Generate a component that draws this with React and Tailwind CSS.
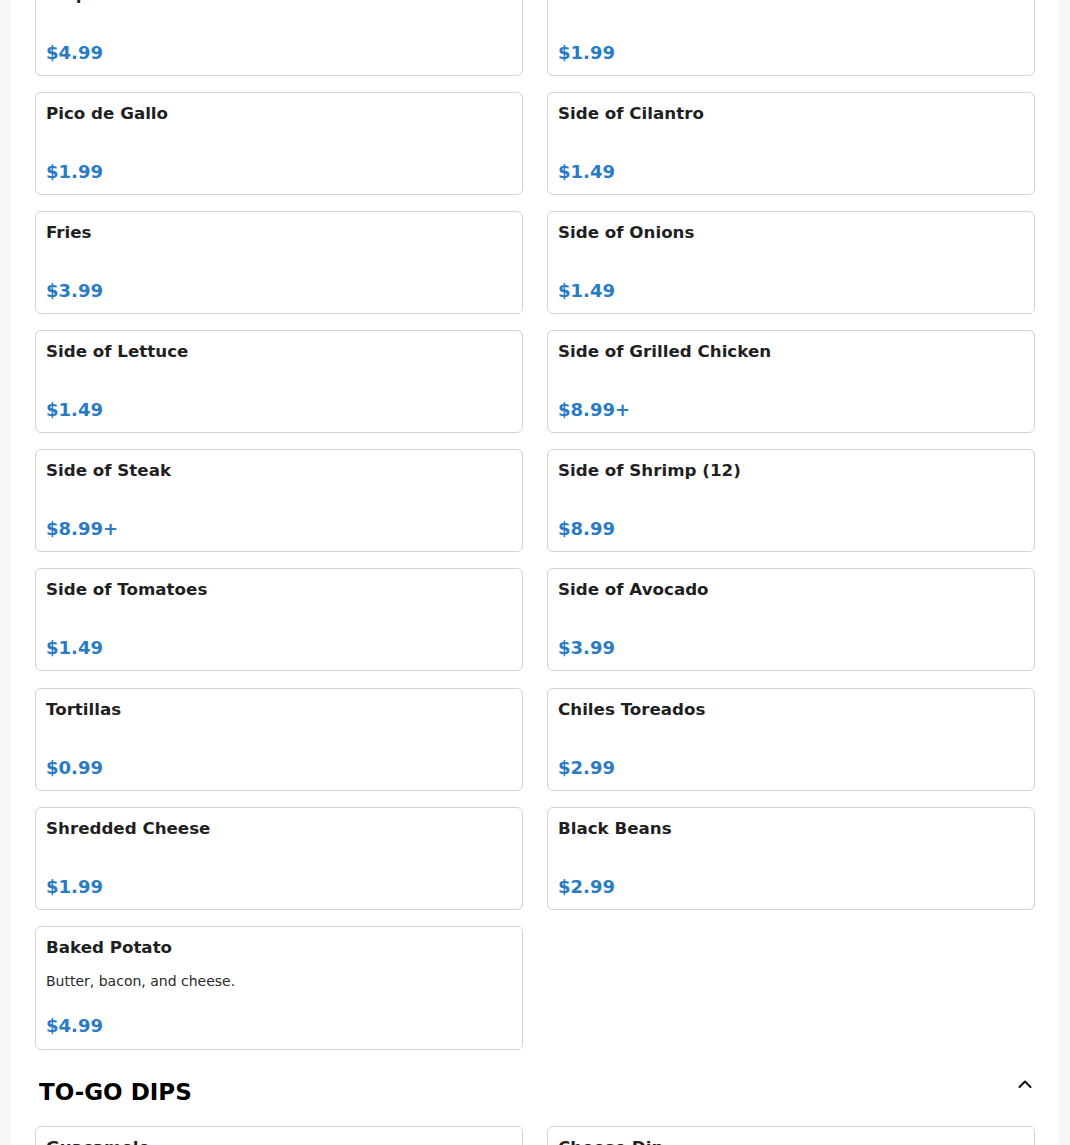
import React from "react";

const rows = [
  [{ t: "Chipotle Enchilada Sauce", p: "$4.99" }, { t: "Sour Cream", p: "$1.99" }],
  [{ t: "Pico de Gallo", p: "$1.99" }, { t: "Side of Cilantro", p: "$1.49" }],
  [{ t: "Fries", p: "$3.99" }, { t: "Side of Onions", p: "$1.49" }],
  [{ t: "Side of Lettuce", p: "$1.49" }, { t: "Side of Grilled Chicken", p: "$8.99+" }],
  [{ t: "Side of Steak", p: "$8.99+" }, { t: "Side of Shrimp (12)", p: "$8.99" }],
  [{ t: "Side of Tomatoes", p: "$1.49" }, { t: "Side of Avocado", p: "$3.99" }],
  [{ t: "Tortillas", p: "$0.99" }, { t: "Chiles Toreados", p: "$2.99" }],
  [{ t: "Shredded Cheese", p: "$1.99" }, { t: "Black Beans", p: "$2.99" }],
  [{ t: "Baked Potato", d: "Butter, bacon, and cheese.", p: "$4.99" }],
];

function Card({ item }) {
  if (item.d) {
    return (
      <div className="rounded-md border border-[#d2d2d2] bg-white px-[10px] pt-[10px] pb-[12px]">
        <div className="text-[16.7px] font-bold leading-[20px] text-[#1f1f1f]">{item.t}</div>
        <div className="mt-[14px] text-[14px] leading-[20px] text-[#2a2a2a]">{item.d}</div>
        <div className="mt-[24px] text-[18px] font-bold leading-[22px] text-[#2a7bc6]">{item.p}</div>
      </div>
    );
  }
  return (
    <div className="rounded-md border border-[#d2d2d2] bg-white px-[10px] pt-[10px] pb-[11px]">
      <div className="text-[16.7px] font-bold leading-[20px] text-[#1f1f1f]">{item.t}</div>
      <div className="mt-[38px] text-[18px] font-bold leading-[22px] text-[#2a7bc6]">{item.p}</div>
    </div>
  );
}

export default function App() {
  return (
    <div
      className="h-[1145px] overflow-hidden bg-[#f7f7f7] pl-[11px] pr-[11px]"
      style={{ fontFamily: '"DejaVu Sans", sans-serif' }}
    >
      <div className="flow-root h-full bg-white px-6">
        <div className="-mt-[27px] grid grid-cols-2 gap-x-6 gap-y-[16.1px]">
          {rows.flat().map((item, i) => (
            <Card key={i} item={item} />
          ))}
        </div>
        <div className="mt-[26px] flex items-start justify-between pl-1 pr-[3px]">
          <h2 className="text-[23px] font-bold leading-[32px] text-black">TO-GO DIPS</h2>
          <svg width="14" height="8" viewBox="0 0 14 8" fill="none" stroke="#111" strokeWidth="2" strokeLinecap="round" strokeLinejoin="round" className="mt-[4px]">
            <path d="M1.5 7L7 1.5L12.5 7" />
          </svg>
        </div>
        <div className="mt-[18px] grid grid-cols-2 gap-x-6 gap-y-4">
          <Card item={{ t: "Guacamole", p: "$4.99" }} />
          <Card item={{ t: "Cheese Dip", p: "$4.99" }} />
        </div>
      </div>
    </div>
  );
}
